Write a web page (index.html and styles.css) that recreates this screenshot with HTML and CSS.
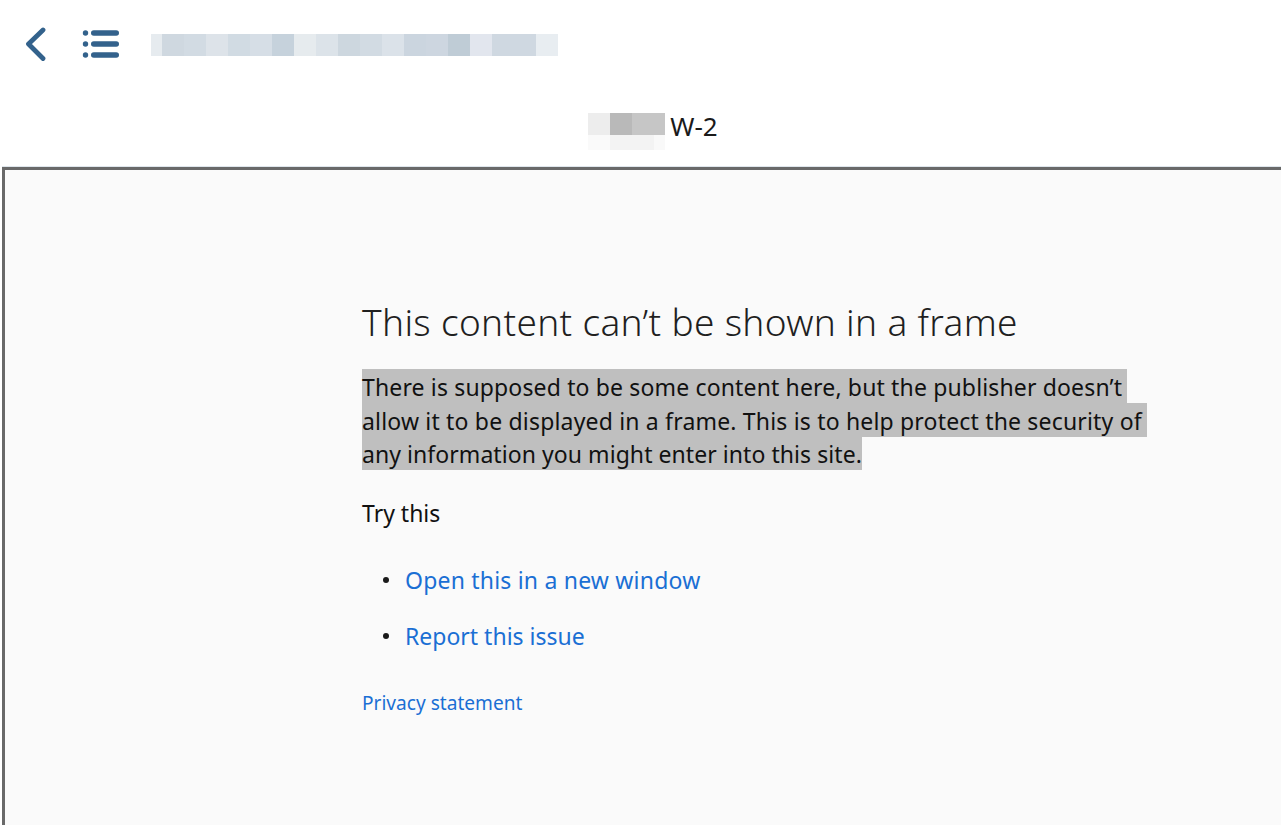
FILE: index.html
```html
<!DOCTYPE html>
<html lang="en">
<head>
<meta charset="utf-8">
<title>W-2</title>
<link rel="stylesheet" href="styles.css">
</head>
<body>
<header class="toolbar">
  <svg class="icon-back" width="22" height="36" viewBox="0 0 22 36"><path d="M19 4 4.500 18 19 32.500" fill="none" stroke="#33628c" stroke-width="4.800" stroke-linecap="round" stroke-linejoin="round"/></svg>
  <svg class="icon-list" width="38" height="30" viewBox="0 0 38 30"><g fill="#33628c"><circle cx="3.500" cy="4" r="2.700"/><circle cx="3.500" cy="15" r="2.700"/><circle cx="3.500" cy="26" r="2.700"/><rect x="9" y="1.200" width="28" height="5.600" rx="2.800"/><rect x="9" y="12.200" width="28" height="5.600" rx="2.800"/><rect x="9" y="23.200" width="28" height="5.600" rx="2.800"/></g></svg>
  <div class="blur-title"></div>
</header>
<div class="doc-title"><span class="blur-name"></span><span class="doc-name">W-2</span></div>
<main class="frame">
  <div class="message">
    <h1>This content can’t be shown in a frame</h1>
    <p class="lead"><span class="selected">There is supposed to be some content here, but the publisher doesn’t</span><br><span class="selected selected-wide">allow it to be displayed in a frame. This is to help protect the security of</span><br><span class="selected selected-end">any information you might enter into this site.</span></p>
    <p class="try">Try this</p>
    <ul class="actions">
      <li><a href="#">Open this in a new window</a></li>
      <li class="action-tight"><a href="#">Report this issue</a></li>
    </ul>
    <a class="privacy" href="#">Privacy statement</a>
  </div>
</main>
</body>
</html>
```
FILE: styles.css
```css
html, body { margin: 0; padding: 0; height: 100%; overflow: hidden; background: #fff; }
body { display: flex; flex-direction: column; font-family: "Noto Sans", "Open Sans", sans-serif; color: #1a1a1a; }
.toolbar { display: flex; align-items: center; height: 88px; flex: none; padding-left: 24px; box-sizing: border-box; }
.icon-back { flex: none; margin-right: 36px; }
.icon-list { flex: none; margin-right: 31px; }
.blur-title { width: 407px; height: 22px; margin-top: 1px; background: linear-gradient(90deg,
  #e6ebef 0 11px, #cfd8e0 11px 33px, #d2dbe3 33px 55px, #dde3e9 55px 77px, #d1dbe3 77px 99px, #d6dee6 99px 121px,
  #c6d2dc 121px 143px, #e6ebee 143px 165px, #dce3e9 165px 187px, #cdd7df 187px 209px, #d2dbe3 209px 231px,
  #dbe2e9 231px 253px, #cbd5df 253px 275px, #cdd6e0 275px 297px, #bfccd6 297px 319px, #e2e6ee 319px 341px,
  #cfd8e1 341px 385px, #e8edf1 385px 407px); }
.doc-title { display: flex; justify-content: center; align-items: flex-start; height: 79px; flex: none; box-sizing: border-box; padding-top: 25px; padding-left: 25px; }
.blur-name { width: 77px; height: 37px; margin-right: 5px; background:
  linear-gradient(90deg, #ededed 0 22px, #b9b9b9 22px 44px, #c6c6c6 44px 77px) top / 100% 22px no-repeat,
  linear-gradient(90deg, #fafafa 0 22px, #f3f3f3 22px 66px, #f9f9f9 66px 77px) bottom / 100% 15px no-repeat; }
.doc-name { margin-top: -1px; font-size: 26px; line-height: 28px; }
.frame { flex: 1; margin-left: 2px; border: 3px solid #696969; border-right: 0; border-bottom: 0; background: #fafafa; box-shadow: 0 -1px 0 #dfe6ec; min-height: 0; }
.message { padding: 128px 0 0 357px; }
h1 { margin: 0; font-weight: 300; font-size: 37px; letter-spacing: .34px; line-height: 48px; color: #1f1f1f; }
.lead { margin: 25px 0 0; font-size: 23px; letter-spacing: .15px; line-height: 33.500px; color: #111; }
.selected { background: #bfbfbf; padding: 2px 5px 0 0; }
.selected-wide { letter-spacing: .18px; }
.selected-end { padding-right: 0; letter-spacing: .06px; }
.try { margin: 25px 0 0; font-size: 23px; line-height: 32px; color: #111; }
.actions { list-style: none; margin: 35px 0 0; padding: 0 0 0 21px; font-size: 23px; letter-spacing: .2px; line-height: 32px; }
.actions li { display: flex; align-items: center; gap: 16px; margin-bottom: 24px; }
.actions .action-tight { letter-spacing: 0; }
.actions li::before { content: ""; width: 6px; height: 6px; border-radius: 50%; background: #1a1a1a; }
a { color: #1a6fd4; text-decoration: none; }
.privacy { display: block; margin-top: 37px; font-size: 19.100px; line-height: 28px; }
```
